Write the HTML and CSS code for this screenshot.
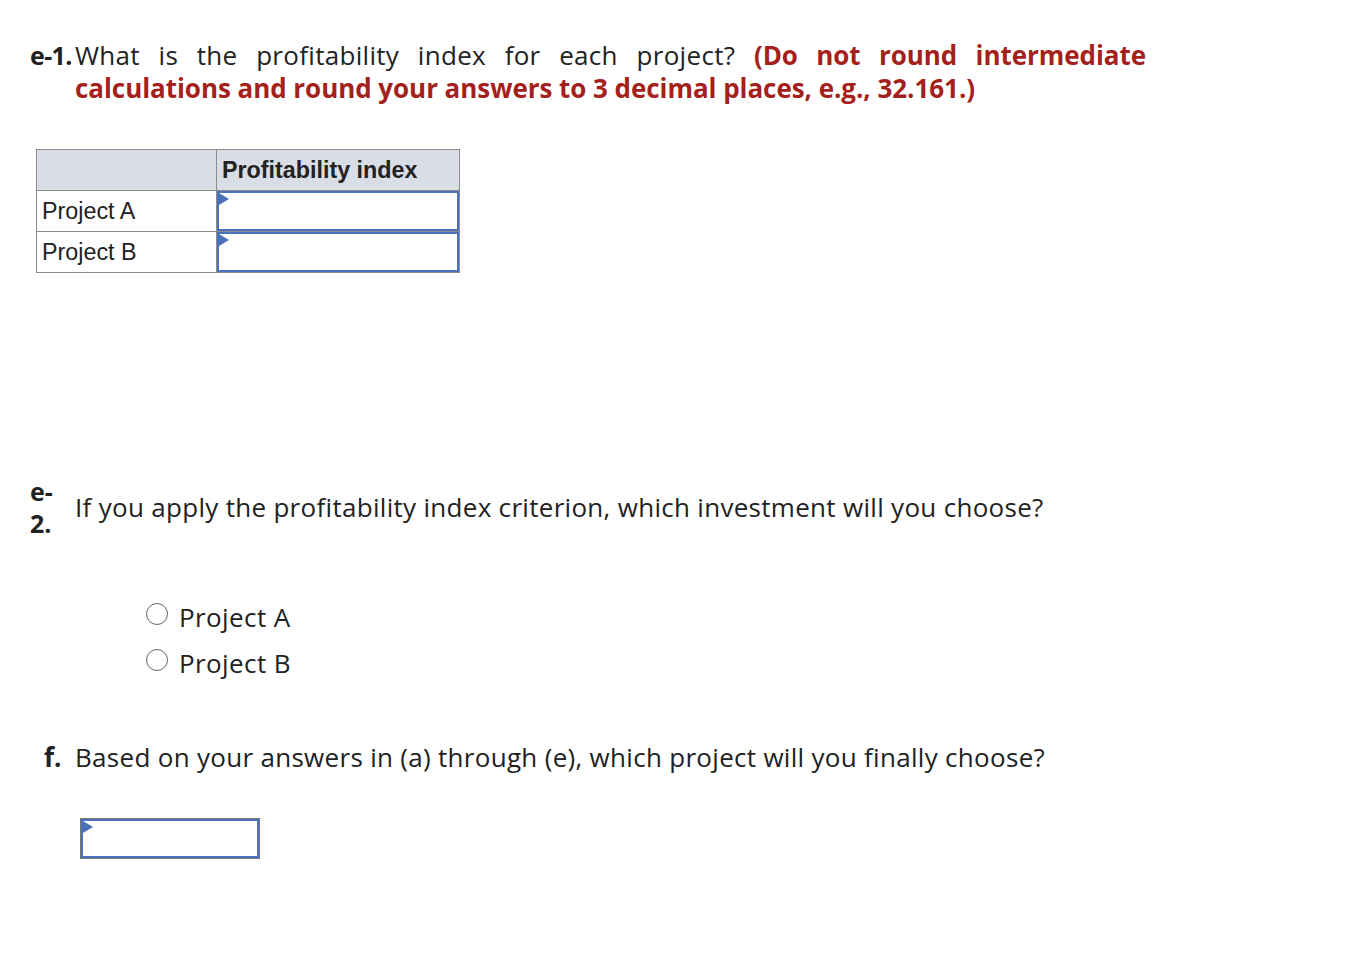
FILE: index.html
```html
<!DOCTYPE html>
<html>
<head>
<meta charset="utf-8">
<link rel="stylesheet" href="styles.css">
</head>
<body>
<div class="page">
  <div class="q q-e1">
    <div class="lbl lbl-e1">e-1.</div>
    <div class="body justify">What is the profitability index for each project? <span class="red">(Do not round intermediate calculations and round your answers to 3 decimal places, e.g., 32.161.)</span></div>
  </div>

  <table class="grid">
    <tr>
      <th class="c1"></th>
      <th class="c2">Profitability index</th>
    </tr>
    <tr>
      <td class="c1">Project A</td>
      <td class="c2 inp"><div class="field"></div></td>
    </tr>
    <tr>
      <td class="c1">Project B</td>
      <td class="c2 inp"><div class="field"></div></td>
    </tr>
  </table>

  <div class="q q-e2">
    <div class="lbl">e-<br>2.</div>
    <div class="body">If you apply the profitability index criterion, which investment will you choose?</div>
  </div>

  <div class="radios">
    <label class="radio"><span class="circle"></span>Project A</label>
    <label class="radio"><span class="circle"></span>Project B</label>
  </div>

  <div class="q q-f">
    <div class="lbl lbl-f">f.</div>
    <div class="body">Based on your answers in (a) through (e), which project will you finally choose?</div>
  </div>

  <div class="fbox"><div class="field"></div></div>
</div>
</body>
</html>
```

FILE: styles.css
```css
html, body {
  margin: 0;
  padding: 0;
  background: #fff;
}
body {
  font-family: "Open Sans", Lato, sans-serif;
  font-variant-ligatures: none;
  color: #222;
}
.page {
  padding: 39px 0 0 30px;
}
.q {
  display: flex;
  font-size: 26px;
  line-height: 33px;
  letter-spacing: 0.3px;
}
.lbl {
  width: 45px;
  flex: none;
  font-weight: 700;
  letter-spacing: 0;
}
.lbl-e1 {
  white-space: nowrap;
  font-size: 25px;
  letter-spacing: -0.6px;
}
.body {
  width: 1071px;
}
.justify {
  text-align: justify;
}
.red {
  color: #a51f1c;
  font-weight: 700;
  letter-spacing: -0.05px;
}
.grid {
  border-collapse: collapse;
  margin: 44px 0 0 6px;
  font-family: "Liberation Sans", Arial, sans-serif;
  font-size: 23.3px;
  color: #222;
}
.grid th, .grid td {
  border: 1px solid #8c8c8c;
  padding: 0 5px;
  height: 40px;
  text-align: left;
}
.grid th {
  background: #d9dde6;
  font-weight: 700;
}
.grid .c1 { width: 169px; }
.grid .c2 { width: 232px; }
.grid td.inp {
  padding: 0;
  position: relative;
}
.field {
  position: relative;
  box-sizing: border-box;
  border: 2px solid #4a72b8;
  height: 100%;
  width: 100%;
  background: #fff;
}
.grid td.inp .field {
  height: 40px;
}
.field::before {
  content: "";
  position: absolute;
  left: 0;
  top: 0;
  border-left: 10px solid #4a72b8;
  border-top: 6px solid transparent;
  border-bottom: 6px solid transparent;
}
.q-e2 {
  margin-top: 202px;
}
.q-e2 .lbl {
  line-height: 32px;
  font-size: 25px;
}
.q-e2 .body {
  align-self: center;
}
.radios {
  display: flex;
  flex-direction: column;
  gap: 14px;
  margin: 62px 0 0 116px;
}
.radio {
  display: flex;
  align-items: center;
  font-size: 26px;
  line-height: 32px;
  letter-spacing: 0.4px;
}
.circle {
  box-sizing: border-box;
  width: 22px;
  height: 22px;
  border: 1.5px solid #666;
  border-radius: 50%;
  margin-right: 11px;
  margin-top: -6px;
}
.q-f {
  margin-top: 62px;
}
.lbl-f {
  padding-left: 14px;
  width: 31px;
}
.fbox {
  margin: 44px 0 0 50px;
  width: 180px;
  height: 41px;
  box-sizing: border-box;
  border: 1px solid #777;
}
```
